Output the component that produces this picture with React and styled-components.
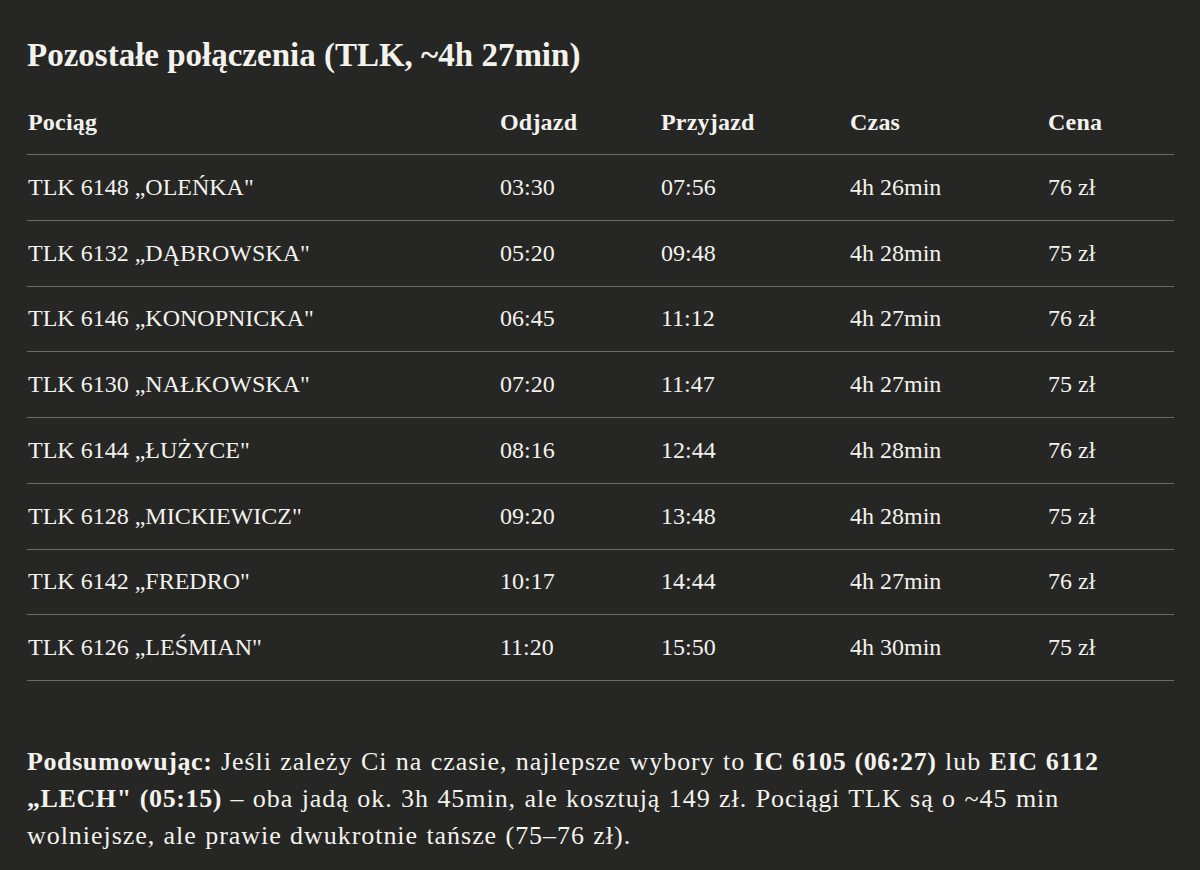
import React from 'react'
import styled, { createGlobalStyle } from 'styled-components'

const GlobalStyle = createGlobalStyle`
  html, body {
    margin: 0;
    padding: 0;
    background: #262624;
  }
  body {
    font-family: "Liberation Serif", "DejaVu Serif", serif;
    color: #f3f2ed;
  }
`

const Page = styled.div`
  width: 1200px;
  min-height: 870px;
  box-sizing: border-box;
  padding: 35px 26px 0 27px;
  background: #262624;
`

const Title = styled.h2`
  margin: 0;
  font-size: 33px;
  line-height: 40px;
  font-weight: 700;
  letter-spacing: 0;
`

const Table = styled.div`
  margin-top: 20px;
  width: 1147px;
`

const Row = styled.div`
  display: grid;
  grid-template-columns: 472px 161px 189px 198px 1fr;
  align-items: center;
  height: ${p => (p.$head ? '60px' : '65.75px')};
  padding-bottom: ${p => (p.$head ? '5px' : '0')};
  border-bottom: 1px solid #6b6a66;
  box-sizing: border-box;
`

const Cell = styled.div`
  padding-left: 1px;
  font-size: 24px;
  font-weight: ${p => (p.$head ? 700 : 400)};
  letter-spacing: ${p => (p.$head ? '0.2px' : '0')};
  white-space: nowrap;
`

const Summary = styled.p`
  margin: 62px 0 0;
  width: 1147px;
  font-size: 26px;
  line-height: 37px;
  letter-spacing: 0.95px;
  word-spacing: 1px;
  b {
    font-weight: 700;
    letter-spacing: 0.6px;
  }
`

const trains = [
  ['TLK 6148 „OLEŃKA"', '03:30', '07:56', '4h 26min', '76 zł'],
  ['TLK 6132 „DĄBROWSKA"', '05:20', '09:48', '4h 28min', '75 zł'],
  ['TLK 6146 „KONOPNICKA"', '06:45', '11:12', '4h 27min', '76 zł'],
  ['TLK 6130 „NAŁKOWSKA"', '07:20', '11:47', '4h 27min', '75 zł'],
  ['TLK 6144 „ŁUŻYCE"', '08:16', '12:44', '4h 28min', '76 zł'],
  ['TLK 6128 „MICKIEWICZ"', '09:20', '13:48', '4h 28min', '75 zł'],
  ['TLK 6142 „FREDRO"', '10:17', '14:44', '4h 27min', '76 zł'],
  ['TLK 6126 „LEŚMIAN"', '11:20', '15:50', '4h 30min', '75 zł'],
]

const headers = ['Pociąg', 'Odjazd', 'Przyjazd', 'Czas', 'Cena']

export default function App() {
  return (
    <Page>
      <GlobalStyle />
      <Title>Pozostałe połączenia (TLK, ~4h 27min)</Title>
      <Table>
        <Row $head>
          {headers.map(h => (
            <Cell $head key={h}>{h}</Cell>
          ))}
        </Row>
        {trains.map(t => (
          <Row key={t[0]}>
            {t.map((c, i) => (
              <Cell key={i}>{c}</Cell>
            ))}
          </Row>
        ))}
      </Table>
      <Summary>
        <b>Podsumowując:</b> Jeśli zależy Ci na czasie, najlepsze wybory to{' '}
        <b>IC 6105 (06:27)</b> lub <b>EIC 6112 „LECH" (05:15)</b> – oba jadą ok. 3h 45min,
        ale kosztują 149 zł. Pociągi TLK są o ~45 min wolniejsze, ale prawie dwukrotnie
        tańsze (75–76 zł).
      </Summary>
    </Page>
  )
}
